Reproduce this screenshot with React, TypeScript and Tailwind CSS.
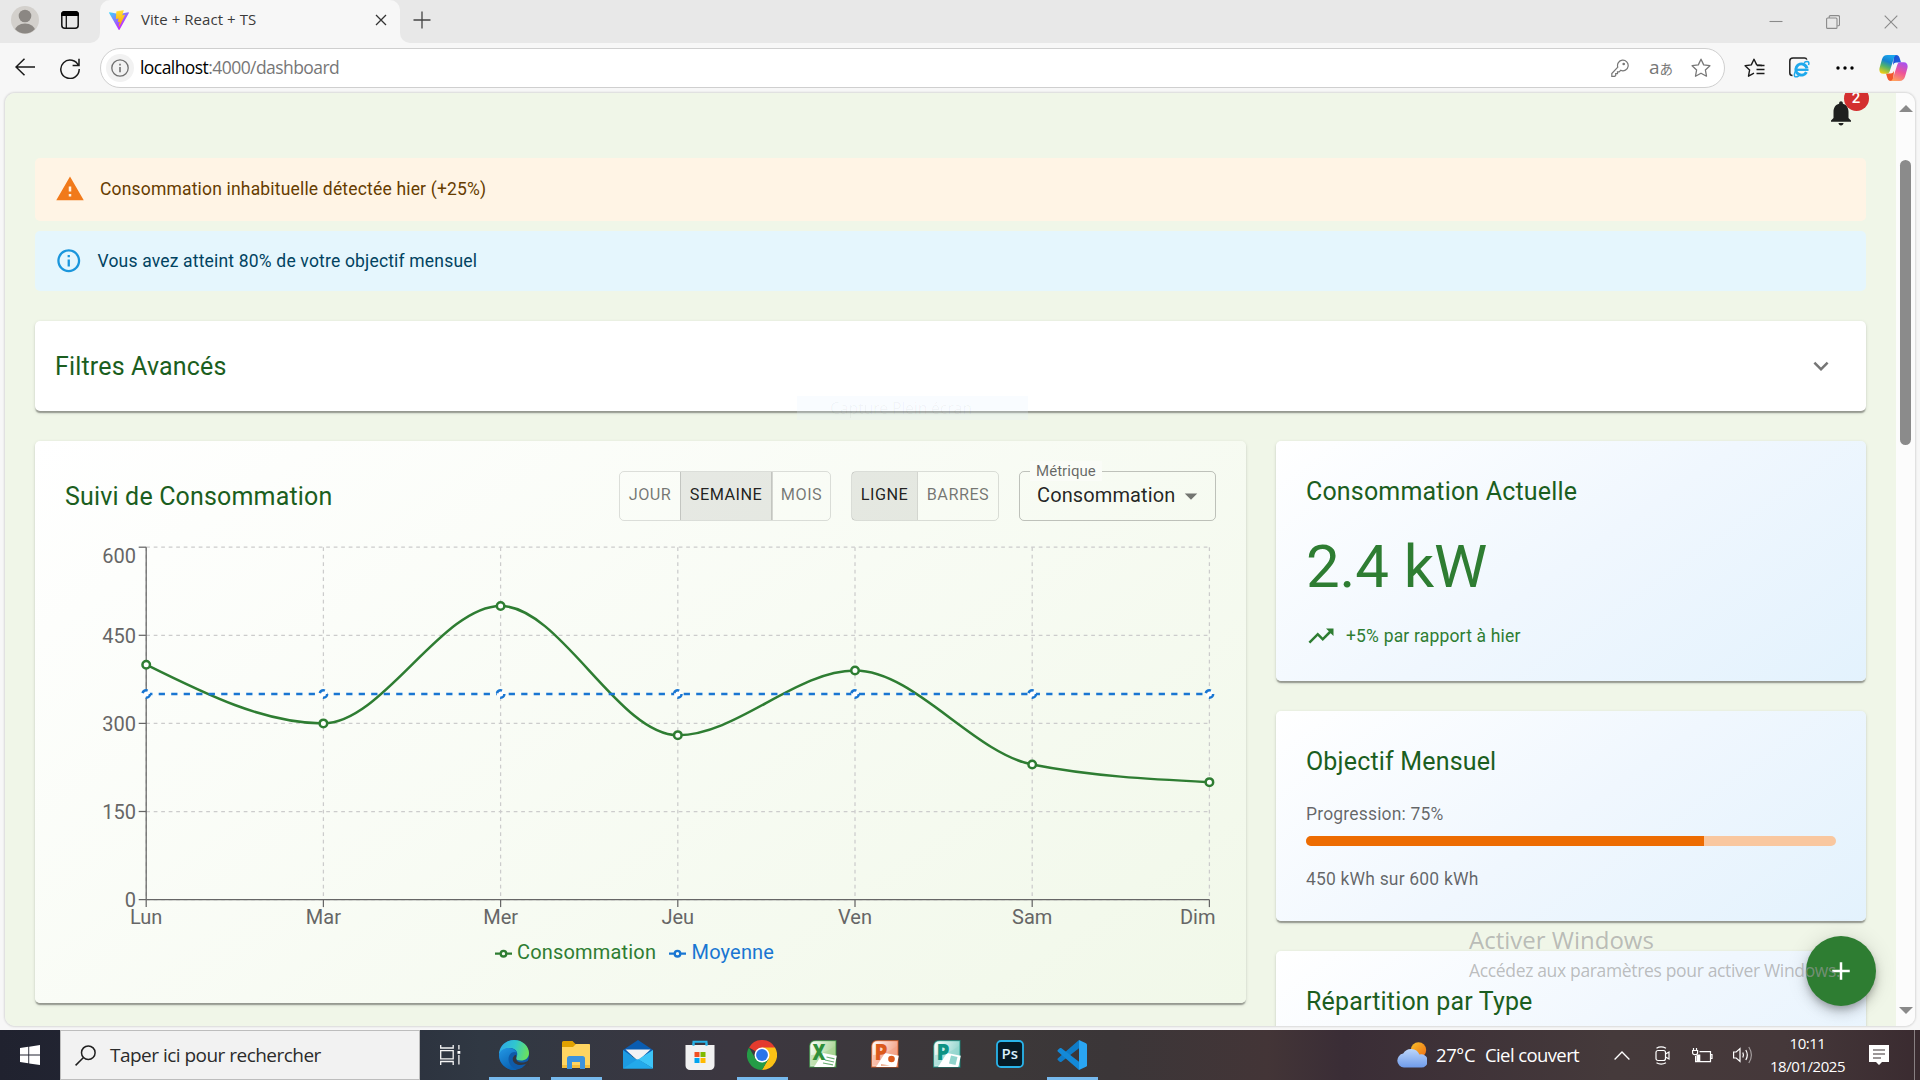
import React from "react";

const CARD_SHADOW =
  "shadow-[0_2.5px_1.25px_-1.25px_rgba(0,0,0,0.2),0_1.25px_1.25px_0_rgba(0,0,0,0.14),0_1.25px_3.75px_0_rgba(0,0,0,0.12)]";

/* ---------- Browser chrome ---------- */

function ViteLogo() {
  return (
    <svg width="20" height="20" viewBox="0 0 256 257">
      <defs>
        <linearGradient id="va" x1="-0.8%" x2="57.6%" y1="7.7%" y2="78.4%">
          <stop offset="0%" stopColor="#41D1FF" />
          <stop offset="100%" stopColor="#BD34FE" />
        </linearGradient>
        <linearGradient id="vb" x1="43.4%" x2="50.3%" y1="2.2%" y2="89%">
          <stop offset="0%" stopColor="#FFEA83" />
          <stop offset="8.3%" stopColor="#FFDD35" />
          <stop offset="100%" stopColor="#FFA800" />
        </linearGradient>
      </defs>
      <path fill="url(#va)" d="M255.153 37.938L134.897 252.976c-2.483 4.44-8.862 4.466-11.382.048L.875 37.958c-2.746-4.814 1.371-10.646 6.827-9.67l120.385 21.517a6.537 6.537 0 0 0 2.322-.004l117.867-21.483c5.438-.991 9.574 4.796 6.877 9.62Z" />
      <path fill="url(#vb)" d="M185.432.063L96.44 17.501a3.268 3.268 0 0 0-2.634 3.014l-5.474 92.456a3.268 3.268 0 0 0 3.997 3.378l24.777-5.718c2.318-.535 4.413 1.507 3.936 3.838l-7.361 36.047c-.495 2.426 1.782 4.5 4.151 3.78l15.304-4.649c2.372-.72 4.652 1.36 4.15 3.788l-11.698 56.621c-.732 3.542 3.979 5.473 5.943 2.437l1.313-2.028l72.516-144.72c1.215-2.423-.88-5.186-3.54-4.672l-25.505 4.922c-2.396.462-4.435-1.77-3.759-4.114l16.646-57.705c.677-2.35-1.37-4.583-3.769-4.113Z" />
    </svg>
  );
}

function TabStrip() {
  return (
    <div className="flex h-[43px] shrink-0 bg-[#e8e8e8]">
      <div className="flex w-[100px] items-center bg-[#f7f7f7]">
        <div className="flex h-full w-full items-center rounded-br-[10px] bg-[#e8e8e8] pb-[3px]">
          <svg className="ml-[11px]" width="28" height="28" viewBox="0 0 28 28">
            <defs>
              <clipPath id="av"><circle cx="14" cy="14" r="13.5" /></clipPath>
            </defs>
            <circle cx="14" cy="14" r="14" fill="#d3d0cc" />
            <g clipPath="url(#av)" fill="#8b8783">
              <circle cx="14" cy="10" r="6.3" />
              <ellipse cx="14" cy="25" rx="10.3" ry="7.6" />
            </g>
          </svg>
          <svg className="ml-[22px]" width="18" height="18" viewBox="0 0 18 18">
            <rect x="0.8" y="0.8" width="16.4" height="16.4" rx="3" fill="none" stroke="#111" strokeWidth="1.5" />
            <path d="M0 5V3.500a3.500 3.500 0 0 1 3.500-3.500h11a3.500 3.500 0 0 1 3.500 3.500V5z" fill="#000" />
            <path d="M5.300 5v12" stroke="#111" strokeWidth="1.3" />
          </svg>
        </div>
      </div>
      <div className="flex w-[300px] items-center rounded-t-[10px] bg-[#f7f7f7] pb-[3px] pl-[9px]">
        <ViteLogo />
        <span className="mb-[2px] ml-3 text-[15px] tracking-[0.06px] text-[#3b3b3b]">Vite + React + TS</span>
        <svg className="ml-auto mr-[13px]" width="12" height="12" viewBox="0 0 12 12">
          <path d="M1 1l10 10M11 1L1 11" stroke="#333" strokeWidth="1.3" />
        </svg>
      </div>
      <div className="grow bg-[#f7f7f7]">
        <div className="flex h-full items-center rounded-bl-[10px] bg-[#e8e8e8]">
          <svg className="mb-1 ml-[13px]" width="18" height="18" viewBox="0 0 18 18">
            <path d="M9 .5v17M.5 9h17" stroke="#444" strokeWidth="1.3" />
          </svg>
          <svg className="ml-auto" width="14" height="14" viewBox="0 0 14 14">
            <path d="M.5 6.500h13" stroke="#8a8a8a" strokeWidth="1.1" />
          </svg>
          <svg className="ml-[43px]" width="14" height="14" viewBox="0 0 14 14">
            <rect x=".6" y="3" width="10.400" height="10.400" rx="1" fill="none" stroke="#8a8a8a" strokeWidth="1.1" />
            <path d="M3.200 3V1.800a1.200 1.200 0 0 1 1.200-1.200h7.800a1.300 1.300 0 0 1 1.300 1.300v7.700a1.200 1.200 0 0 1-1.200 1.200h-1" fill="none" stroke="#8a8a8a" strokeWidth="1.1" />
          </svg>
          <svg className="ml-[44px] mr-[22px]" width="14" height="14" viewBox="0 0 14 14">
            <path d="M.7.7l12.600 12.600M13.300.7L.7 13.300" stroke="#8a8a8a" strokeWidth="1.1" />
          </svg>
        </div>
      </div>
    </div>
  );
}

const STAR = "M10 1.200l2.700 5.700 6.200.8-4.500 4.300 1.100 6.200L10 15.200l-5.500 3 1.100-6.200L1.100 7.700l6.200-.8z";

function CopilotIcon() {
  return (
    <svg width="29" height="28" viewBox="0 0 29 28">
      <defs>
        <linearGradient id="c1" x1="0.6" y1="0" x2="0.2" y2="1">
          <stop offset="0" stopColor="#1aa7ee" />
          <stop offset="0.35" stopColor="#1683cf" />
          <stop offset="0.62" stopColor="#52b36a" />
          <stop offset="1" stopColor="#f5cf12" />
        </linearGradient>
        <linearGradient id="c2" x1="0.7" y1="0" x2="0.3" y2="1">
          <stop offset="0" stopColor="#a951ee" />
          <stop offset="0.5" stopColor="#ee5597" />
          <stop offset="1" stopColor="#ffa25e" />
        </linearGradient>
        <linearGradient id="c3" x1="0" y1="0" x2="1" y2="1">
          <stop offset="0" stopColor="#1a4fd0" />
          <stop offset="1" stopColor="#2363e6" />
        </linearGradient>
      </defs>
      <path d="M15 1h2c2.400 0 3.200 1.400 3.900 3.800L22 8.500h-4.500c-2 0-3 1-3.600 3z" fill="url(#c3)" />
      <path d="M14 27h-2c-2.400 0-3.200-1.400-3.900-3.800L7 19.500h4.500c2 0 3-1 3.600-3z" fill="#f2572d" />
      <path d="M8.500 1H18c-1.700 0-2.500 1.200-3.200 3.500l-4 12.500c-.6 2-1.600 2.700-3.300 2.700H4.200C1 19.700-.2 17 .6 13.800L3 5.200C3.800 2.500 5.500 1 8.500 1z" fill="url(#c1)" />
      <path d="M20.500 27H11c1.700 0 2.500-1.200 3.200-3.500l4-12.500c.6-2 1.600-2.700 3.300-2.700h3.300c3.200 0 4.400 2.700 3.600 5.900L26 22.800c-.8 2.700-2.500 4.200-5.500 4.200z" fill="url(#c2)" />
    </svg>
  );
}

function Toolbar() {
  return (
    <div className="flex h-[50px] shrink-0 items-center bg-[#f7f7f7]">
      <svg className="mb-[2px] ml-[15px]" width="20" height="18" viewBox="0 0 20 18">
        <path d="M9.500.7L1 9l8.500 8.300M1 9h19" fill="none" stroke="#1a1a1a" strokeWidth="1.500" />
      </svg>
      <svg className="ml-[25px]" width="20" height="21" viewBox="0 0 20 21">
        <path d="M18.600 8A9.200 9.200 0 1 0 19.200 11M19 .8v6.700h-6.400" fill="none" stroke="#1a1a1a" strokeWidth="1.500" />
      </svg>
      <div className="ml-5 flex h-10 w-[1625px] items-center rounded-full border border-[#cfcfcf] bg-white pl-[5px]">
        <span className="flex size-7 items-center justify-center rounded-full bg-[#f2f2f2]">
          <svg width="18" height="18" viewBox="0 0 18 18">
            <circle cx="9" cy="9" r="8.200" fill="none" stroke="#707070" strokeWidth="1.300" />
            <path d="M9 8v5.300M9 4.700v1.700" stroke="#707070" strokeWidth="1.600" />
          </svg>
        </span>
        <span className="mb-[2px] ml-[6px] text-[17.5px] tracking-[-0.56px] text-[#777]">
          <span className="text-black">localhost</span>:4000/dashboard
        </span>
        <svg className="ml-auto" width="18" height="18" viewBox="0 0 18 18" fill="none" stroke="#777" strokeWidth="1.200">
          <path d="M11.300 1.200a5.300 5.300 0 1 1-1.600 10.100L8.200 12.800H6.500v1.800H4.700v1.900L3.800 17.300H.8v-2.800l6-6.300A5.300 5.300 0 0 1 11.300 1.200z" />
          <circle cx="12.700" cy="5" r="0.700" fill="#777" />
        </svg>
        <span className="mb-[2px] ml-[20px] flex w-[25px] items-baseline text-[#777]">
          <span className="text-[19px] leading-none">a</span>
          <span className="font-['Noto_Sans_CJK_JP',sans-serif] text-[13.5px] leading-none">あ</span>
        </span>
        <svg className="ml-[17px] mr-[13px]" width="20" height="20" viewBox="0 0 20 20">
          <path d={STAR} fill="none" stroke="#777" strokeWidth="1.300" strokeLinejoin="round" />
        </svg>
      </div>
      <svg className="ml-[19px]" width="21" height="20" viewBox="0 0 21 20" fill="none" stroke="#1a1a1a" strokeWidth="1.400">
        <path d="M18 7.500l-5.300-.6L10 1.200 7.300 6.900l-6.200.8L5.600 12l-1.100 6.200L10 15.200" strokeLinejoin="round" />
        <path d="M13 7.500h7.500M12.500 11.500h8M12.500 15.500h8" />
      </svg>
      <svg className="mb-[2px] ml-6" width="21" height="21" viewBox="0 0 21 21">
        <path d="M3.500 18.500C1.800 18.500.8 17.500.8 16V4C.8 2 2 1 4 1h11.500c1.300 0 2 .6 2.300 1.600" fill="none" stroke="#222" strokeWidth="1.500" />
        <circle cx="12.500" cy="12.500" r="5.600" fill="none" stroke="#1fa9ec" strokeWidth="3" strokeDasharray="30.500 6" transform="rotate(28 12.500 12.500)" />
        <path d="M8 12.800h11.500" stroke="#1fa9ec" strokeWidth="2.300" />
        <path d="M6.500 14c-2.500 5.500-.8 7 3.200 5M15 5.600c3.500-2 5.800-1 4.500 2.500" fill="none" stroke="#1fa9ec" strokeWidth="1.500" />
      </svg>
      <svg className="ml-[26px]" width="18" height="4" viewBox="0 0 18 4">
        <circle cx="2" cy="2" r="1.700" /><circle cx="9" cy="2" r="1.700" /><circle cx="16" cy="2" r="1.700" />
      </svg>
      <div className="ml-[25px]"><CopilotIcon /></div>
    </div>
  );
}

/* ---------- Chart ---------- */

const DAYS = ["Lun", "Mar", "Mer", "Jeu", "Ven", "Sam", "Dim"];
const VALUES = [400, 300, 500, 280, 390, 230, 200];
const X0 = 146.2;
const STEP = 177.2;
const Y0 = 899.600;
const TOP = 547.200;
const px = (i: number) => X0 + i * STEP;
const py = (v: number) => Y0 - (v / 600) * (Y0 - TOP);

/* Monotone cubic interpolation through equally spaced samples */
function monotonePath(values: number[]): string {
  const pts = values.map((v, i) => [px(i), py(v)]);
  const n = pts.length;
  const slopes = pts.slice(1).map((p, i) => (p[1] - pts[i][1]) / STEP);
  const t: number[] = [];
  for (let i = 1; i < n - 1; i++) {
    const a = slopes[i - 1];
    const b = slopes[i];
    t[i] = (Math.sign(a) + Math.sign(b)) * Math.min(Math.abs(a), Math.abs(b), 0.5 * Math.abs((a + b) / 2)) || 0;
  }
  t[0] = (3 * slopes[0] - t[1]) / 2;
  t[n - 1] = (3 * slopes[n - 2] - t[n - 2]) / 2;
  let d = `M${pts[0][0]},${pts[0][1]}`;
  const h = STEP / 3;
  for (let i = 1; i < n; i++) {
    const [xa, ya] = pts[i - 1];
    const [xb, yb] = pts[i];
    d += `C${xa + h},${ya + h * t[i - 1]},${xb - h},${yb - h * t[i]},${xb},${yb}`;
  }
  return d;
}

function Chart() {
  const levels = [0, 150, 300, 450, 600];
  return (
    <svg className="block" width="1211" height="482" viewBox="35 521 1211 482" fontSize="20" fontFamily="Roboto, sans-serif">
      <g stroke="#ccc" strokeWidth="1.25" strokeDasharray="3.75 3.75">
        {levels.map((v) => <line key={v} x1={X0} x2={px(6)} y1={py(v)} y2={py(v)} />)}
        {DAYS.map((d, i) => <line key={d} x1={px(i)} x2={px(i)} y1={TOP} y2={Y0} />)}
      </g>
      <g stroke="#666" strokeWidth="1.25">
        <line x1={X0} x2={px(6)} y1={Y0} y2={Y0} />
        <line x1={X0} x2={X0} y1={TOP} y2={Y0} />
        {levels.map((v) => <line key={v} x1={X0 - 7.5} x2={X0} y1={py(v)} y2={py(v)} />)}
        {DAYS.map((d, i) => <line key={d} x1={px(i)} x2={px(i)} y1={Y0} y2={Y0 + 7.5} />)}
      </g>
      <g fill="#666">
        {levels.map((v) => (
          <text key={v} x="136" y={v === 600 ? 563 : py(v) + 7.300} textAnchor="end">{v}</text>
        ))}
        {DAYS.map((d, i) => (
          <text key={d} x={i === 6 ? 1215.500 : px(i)} y="923.700" textAnchor={i === 6 ? "end" : "middle"}>{d}</text>
        ))}
      </g>
      <path d={monotonePath(VALUES)} fill="none" stroke="#2e7d32" strokeWidth="2.5" />
      {VALUES.map((v, i) => (
        <circle key={i} cx={px(i)} cy={py(v)} r="3.75" fill="#fff" stroke="#2e7d32" strokeWidth="2.5" />
      ))}
      <line x1={X0} x2={px(6)} y1={py(350)} y2={py(350)} stroke="#1976d2" strokeWidth="2.5" strokeDasharray="6.25 6.25" />
      {DAYS.map((d, i) => (
        <circle key={d} cx={px(i)} cy={py(350)} r="3.75" fill="#fff" stroke="#1976d2" strokeWidth="2.5" strokeDasharray="6.25 6.25" />
      ))}
      <g fill="none" strokeWidth="2.300">
        <path stroke="#2e7d32" d="M495 953.700h5.700M506.300 953.700h5.700M500.700 953.700a2.800 2.800 0 1 0 5.600 0a2.800 2.800 0 1 0-5.600 0" />
        <path stroke="#1976d2" d="M669 953.700h5.700M680.300 953.700h5.700M674.700 953.700a2.800 2.800 0 1 0 5.600 0a2.800 2.800 0 1 0-5.600 0" />
      </g>
      <g letterSpacing="0.18">
        <text x="517" y="959" fill="#2e7d32">Consommation</text>
        <text x="691.500" y="959" fill="#1976d2">Moyenne</text>
      </g>
    </svg>
  );
}

/* ---------- Dashboard ---------- */

const TITLE = "translate-y-px text-[25px] leading-10 tracking-[0.17px] text-[#1b5e20]";
const BODY = "text-[17.5px] leading-[25px] tracking-[0.18px]";
const SIDE_CARD = `rounded-[5px] bg-[linear-gradient(145deg,#ffffff_0%,#f0f7fe_50%,#e3f2fd_100%)] p-[30px] ${CARD_SHADOW}`;

function Toggle({ items, active, widths }: { items: string[]; active: number; widths: string[] }) {
  return (
    <div className="flex h-[50px] rounded-[5px] border border-black/12 text-[16.25px] tracking-[0.464px]">
      {items.map((t, i) => (
        <div
          key={t}
          className={`flex items-center justify-center pb-[1px] ${widths[i]} ${i > 0 ? "border-l border-black/15" : ""} ${
            i === active ? "bg-black/8 text-black/87" : "text-black/54"
          } ${i === active && i > 0 ? "border-r" : ""}`}
        >
          {t}
        </div>
      ))}
    </div>
  );
}

function MainCard() {
  return (
    <section className={`h-[562px] w-[1211px] rounded-[5px] bg-[linear-gradient(145deg,#ffffff_0%,#f1f8e9_100%)] pt-[30px] ${CARD_SHADOW}`}>
      <div className="flex h-[50px] items-center px-[30px]">
        <h2 className={`${TITLE} mr-auto`}>Suivi de Consommation</h2>
        <Toggle items={["JOUR", "SEMAINE", "MOIS"]} active={1} widths={["w-[60px]", "w-[92px]", "w-[58px]"]} />
        <div className="w-5" />
        <Toggle items={["LIGNE", "BARRES"]} active={0} widths={["w-[65px]", "w-[81px]"]} />
        <div className="relative ml-5 flex h-[50px] w-[197px] items-center rounded-[5px] border border-black/23 px-[17px] pb-[3px]">
          <span className="absolute -top-[11px] left-[10px] bg-[#fafcf7] px-[6px] text-[15px] leading-5 tracking-[0.05px] text-black/60">Métrique</span>
          <span className="text-[20px] tracking-[0.12px] text-black/87">Consommation</span>
          <svg className="ml-[1px] mt-[3px] shrink-0" width="30" height="30" viewBox="0 0 24 24"><path fill="#737571" d="M7 10l5 5 5-5z" /></svg>
        </div>
      </div>
      <Chart />
    </section>
  );
}

function Dashboard() {
  return (
    <main className="w-[1891px] shrink-0 bg-[#f0f6e8] px-[30px] font-['Roboto',sans-serif]">
      <div className="flex h-[65px] justify-end">
        <div className="relative mr-[10px] mt-[5px] size-[30px]">
          <svg width="30" height="30" viewBox="0 0 24 24" fill="#1f211f">
            <path d="M12 22c1.100 0 2-.9 2-2h-4c0 1.100.89 2 2 2m6-6v-5c0-3.070-1.640-5.640-4.500-6.320V4c0-.83-.67-1.500-1.500-1.500s-1.500.67-1.500 1.500v.68C7.630 5.360 6 7.920 6 11v5l-2 2v1h16v-1z" />
          </svg>
          <span className="absolute -top-[12px] left-[17.500px] flex size-[25px] items-center justify-center rounded-full bg-[#d32f2f] text-[15px] font-medium text-white">2</span>
        </div>
      </div>
      <div className="flex h-[63px] w-[1831px] items-center rounded-[5px] bg-[#fff4e5] pl-5">
        <svg className="mb-[2px]" width="30" height="30" viewBox="0 0 24 24" fill="#f17a1b"><path d="M1 21h22L12 2zm12-3h-2v-2h2zm0-4h-2v-4h2z" /></svg>
        <span className="ml-[15px] text-[17.5px] tracking-[0.18px] text-[#663c00]">Consommation inhabituelle détectée hier (+25%)</span>
      </div>
      <div className="mt-[10px] flex h-[60px] w-[1831px] items-center rounded-[5px] bg-[#e5f6fd] pl-5">
        <svg width="27.500" height="27.500" viewBox="0 0 24 24" fill="#1b96dc"><path d="M11 7h2v2h-2zm0 4h2v6h-2zm1-9C6.480 2 2 6.480 2 12s4.480 10 10 10 10-4.480 10-10S17.520 2 12 2m0 18c-4.410 0-8-3.590-8-8s3.590-8 8-8 8 3.590 8 8-3.590 8-8 8" /></svg>
        <span className="ml-[15px] text-[17.5px] tracking-[0.18px] text-[#014361]">Vous avez atteint 80% de votre objectif mensuel</span>
      </div>
      <div className={`mt-[30px] flex h-[90px] w-[1831px] items-center rounded-[5px] bg-white px-5 ${CARD_SHADOW}`}>
        <h2 className={TITLE}>Filtres Avancés</h2>
        <svg className="ml-auto mr-[10px]" width="30" height="30" viewBox="0 0 24 24" fill="#757575"><path d="M16.590 8.590 12 13.170 7.410 8.590 6 10l6 6 6-6z" /></svg>
      </div>
      <div className="mt-[30px] flex gap-[30px]">
        <MainCard />
        <div className="flex w-[590px] flex-col gap-[30px]">
          <section className={`h-[240px] ${SIDE_CARD}`}>
            <h2 className={TITLE}>Consommation Actuelle</h2>
            <p className="mt-[21px] text-[60px] leading-[70px] tracking-[-0.1px] text-[#2e7d32]">2.4 kW</p>
            <div className="mt-[19px] flex h-[30px] items-center text-[17.5px] tracking-[0.18px] text-[#2e7d32]">
              <svg width="30" height="30" viewBox="0 0 24 24" fill="currentColor"><path d="m16 6 2.290 2.290-4.880 4.880-4-4L2 16.590 3.410 18l6-6 4 4 6.300-6.290L22 12V6z" /></svg>
              <span className="ml-[10px]">+5% par rapport à hier</span>
            </div>
          </section>
          <section className={`h-[210px] ${SIDE_CARD}`}>
            <h2 className={TITLE}>Objectif Mensuel</h2>
            <p className={`mt-[21px] text-black/60 ${BODY}`}>Progression: 75%</p>
            <div className="mt-[9px] h-[10px] overflow-hidden rounded-[5px] bg-[#f9c79f]">
              <div className="h-full w-3/4 bg-[#ed6c02]" />
            </div>
            <p className={`mt-[21px] text-black/60 ${BODY}`}>450 kWh sur 600 kWh</p>
          </section>
          <section className={`h-[240px] ${SIDE_CARD}`}>
            <h2 className={TITLE}>Répartition par Type</h2>
          </section>
        </div>
      </div>
    </main>
  );
}

function Scrollbar() {
  return (
    <div className="flex w-[19px] flex-col items-center bg-[#fcfcfc] pt-3">
      <svg width="14" height="7" viewBox="0 0 14 7"><path d="M7 0l7 7H0z" fill="#8a8a8a" /></svg>
      <div className="mt-12 h-[285px] w-[11px] rounded-full bg-[#8b8b8b]" />
      <svg className="mb-3 mt-auto" width="14" height="7" viewBox="0 0 14 7"><path d="M7 7l7-7H0z" fill="#8a8a8a" /></svg>
    </div>
  );
}

/* ---------- Taskbar ---------- */

function EdgeIcon() {
  return (
    <svg width="30" height="30" viewBox="0 0 30 30">
      <defs>
        <linearGradient id="e1" x1="0" y1="0.3" x2="1" y2="0.5">
          <stop offset="0" stopColor="#2fa8e8" /><stop offset="0.5" stopColor="#30c6cf" /><stop offset="1" stopColor="#6be25c" />
        </linearGradient>
        <linearGradient id="e2" x1="0" y1="0" x2="0.5" y2="1">
          <stop offset="0" stopColor="#2398e5" /><stop offset="1" stopColor="#0a64b5" />
        </linearGradient>
      </defs>
      <circle cx="15" cy="15" r="15" fill="#0f5ba9" />
      <path d="M0 15C0 6 7 0 15 0c9 0 15 6.500 15 13 0 5-3.800 7.500-8 7.500-4.500 0-5.500-1.700-4.500-3.500C20 12 16 8 11 8 5 8 1 12 0 15z" fill="url(#e1)" />
      <path d="M0 15c1-5 5.500-7 9.500-7 4 0 7 2 8.200 4.500C14 10.500 9.500 13.500 9.500 19c0 5 3.500 9.500 8.500 10.700C8.500 31.500 0 24 0 15z" fill="url(#e2)" />
      <path d="M17.300 17.500c-.7 3 2 5 5.700 5 2.600 0 4.600-.8 5.800-1.600l1.700.3-1 4.300-4 1c1.500-1.300 2.200-2.400 2.700-3.400-6 4-14.500 1.500-14.500-4.100 0-1.500 1.300-3.200 2.800-4.200.8.7 1 1.700.8 2.700z" fill="#33363f" />
    </svg>
  );
}

function ExplorerIcon() {
  return (
    <svg width="28" height="28" viewBox="0 0 28 28">
      <path d="M0 1.500A1.500 1.500 0 0 1 1.500 0h9l3 3H28v8H0z" fill="#e0a100" />
      <path d="M0 6h11l3-3h12.500A1.500 1.500 0 0 1 28 4.500V27H0z" fill="#ffd561" />
      <path d="M0 24h28v3H0z" fill="#f4bd3a" />
      <path d="M5 28V17.500A2.500 2.500 0 0 1 7.500 15h13a2.500 2.500 0 0 1 2.500 2.500V28h-5v-7h-8v7z" fill="#3d93dc" />
    </svg>
  );
}

function MailIcon() {
  return (
    <svg width="30" height="29" viewBox="0 0 30 29">
      <path d="M0 10L15 0l15 10v6H0z" fill="#0a5cb0" />
      <path d="M2.500 9.500h25L15 21z" fill="#f2f2f4" />
      <path d="M0 10l15 10.500L30 28.500H0z" fill="#1d9be2" />
      <path d="M30 10L15 19.500 30 28.500z" fill="#3dc4f7" />
      <path d="M0 28.500L15 19l15 9.500z" fill="#23a9ea" />
    </svg>
  );
}

function StoreIcon() {
  return (
    <svg width="30" height="30" viewBox="0 0 30 30">
      <path d="M8.500 8V1.800h13V8" fill="none" stroke="#27b3e8" strokeWidth="2" />
      <path d="M.5 5h29v20.500a4.500 4.500 0 0 1-4.500 4.500H5a4.500 4.500 0 0 1-4.500-4.500z" fill="#f1f1f1" />
      <path d="M8.500 2.800v3M21.500 2.800v3" stroke="#27b3e8" strokeWidth="2" />
      <path d="M9.500 12h5v5h-5z" fill="#f25022" /><path d="M15.500 12h5v5h-5z" fill="#7fba00" />
      <path d="M9.500 18h5v5h-5z" fill="#00a4ef" /><path d="M15.500 18h5v5h-5z" fill="#ffb900" />
    </svg>
  );
}

function ChromeIcon() {
  return (
    <svg width="30" height="30" viewBox="0 0 48 48">
      <path d="M24 24L3.200 12A24 24 0 0 1 44.800 12z" fill="#e33b2e" />
      <path d="M24 12h20.800A24 24 0 0 1 24 48l10.400-18z" fill="#fbc116" />
      <path d="M13.600 30L3.200 12A24 24 0 0 0 24 48l10.400-18z" fill="#249c46" />
      <circle cx="24" cy="24" r="12" fill="#fff" />
      <circle cx="24" cy="24" r="9.500" fill="#2a75ea" />
    </svg>
  );
}

function OfficeIcon({ letter, dark, light, id }: { letter: string; dark: string; light: string; id: string }) {
  return (
    <svg className="mb-[2px] mr-[2px]" width="28" height="28" viewBox="0 0 28 28">
      <defs>
        <linearGradient id={id} x1="0" y1="0" x2="1" y2="0.4">
          <stop offset="0" stopColor="#fff" /><stop offset="1" stopColor={light} />
        </linearGradient>
      </defs>
      <path d="M.7 27V6Q1 .7 7 .7h20V27z" fill={`url(#${id})`} stroke={dark} strokeOpacity="0.6" strokeWidth="1.300" />
      <path d="M2 25.500V15c8 0 16-3 24-9v19.500z" fill={light} opacity="0.5" />
      <path d="M14 13l13.800 2.800-2.500 11.200H5z" fill="#fff" />
      <text x="3.500" y="20" fontFamily="Open Sans, sans-serif" fontWeight="800" fontSize="22" fill={dark} textLength="13" lengthAdjust="spacingAndGlyphs">{letter}</text>
      {letter === "X" ? (
        <path d="M17.500 17l8 1.800M16 20l9 2M14 23l10 1.800" stroke={dark} strokeWidth="1.200" opacity="0.7" />
      ) : id === "of2" ? (
        <g fill={dark}><circle cx="20.500" cy="19" r="3.300" /><path d="M10 24l9 1.500-9 .5z" opacity=".5" /></g>
      ) : (
        <path d="M18 15.500l6.500 1.500-2 8-6.500-1.500z" fill={light} />
      )}
    </svg>
  );
}

function PhotoshopIcon() {
  return (
    <svg className="mb-[2px]" width="28" height="28" viewBox="0 0 28 28">
      <rect x="1" y="1" width="26" height="26" rx="4" fill="#051a26" stroke="#29b5ec" strokeWidth="1.800" />
      <text x="5.500" y="18.500" fontFamily="Open Sans, sans-serif" fontWeight="600" fontSize="14.500" fill="#d7effb" textLength="16.500" lengthAdjust="spacingAndGlyphs">Ps</text>
    </svg>
  );
}

function CodeIcon() {
  return (
    <svg width="30" height="30" viewBox="0 0 30 30">
      <path d="M22 0L1 18.300c-.7.6-.7 1.400 0 2l1.700 1.500c.6.400 1.200.4 1.800 0L22 8.300z" fill="#0f7cc8" />
      <path d="M22 30L1 11.700c-.7-.6-.7-1.400 0-2l1.700-1.500c.6-.4 1.200-.4 1.800 0L22 21.700z" fill="#1389d8" />
      <path d="M22 0l7 3.200c.6.3 1 .9 1 1.600v20.400c0 .7-.4 1.300-1 1.600L22 30z" fill="#2aa5f2" />
    </svg>
  );
}

function Taskbar() {
  const apps: [React.ReactNode, boolean][] = [
    [<EdgeIcon />, true],
    [<ExplorerIcon />, true],
    [<MailIcon />, false],
    [<StoreIcon />, false],
    [<ChromeIcon />, true],
    [<OfficeIcon letter="X" dark="#2f8f3a" light="#a5d38f" id="of1" />, false],
    [<OfficeIcon letter="P" dark="#dc5a1c" light="#f4a083" id="of2" />, false],
    [<OfficeIcon letter="P" dark="#0f9384" light="#8fd4cc" id="of3" />, false],
    [<PhotoshopIcon />, false],
    [<CodeIcon />, true],
  ];
  return (
    <footer className="flex h-[50px] shrink-0 bg-[linear-gradient(90deg,#20222f_0%,#262a38_15%,#303843_25%,#3c3740_38%,#3c3839_52%,#3b3638_58%,#433537_66%,#3a2d36_70%,#453a3b_84%,#45383a_93%,#3a2b30_100%)] text-white">
      <div className="flex w-[60px] items-center justify-center">
        <svg width="20" height="20" viewBox="0 0 20 20" fill="#fff"><path d="M0 3l8.300-1.200v7.800H0zM9.200 1.700L20 0v9.600H9.200zM0 10.500h8.300v7.800L0 17zM9.200 10.500H20V20L9.200 18.400z" /></svg>
      </div>
      <div className="flex w-[360px] items-center border border-[#bdbdbd] bg-[#f2f2f2] pl-[14px] text-[#2b2b2b]">
        <svg width="21" height="21" viewBox="0 0 21 21" fill="none" stroke="#1f1f1f" strokeWidth="1.500"><circle cx="13.300" cy="7.700" r="6.800" /><path d="M8.500 12.500L.6 20.400" /></svg>
        <span className="ml-[14px] text-[19px] tracking-[-0.52px]">Taper ici pour rechercher</span>
      </div>
      <div className="flex w-[63px] items-center justify-center">
        <svg className="mr-[2px]" width="21" height="20" viewBox="0 0 21 20" fill="none" stroke="#f5f5f5" strokeWidth="1.300"><path d="M.7 0v3h12.500V0M.7 20v-3.500h12.500V20M.7 5.700h12.500v8.200H.7zM18.900 0v4.500M18.900 10v9.500" /><path d="M17.500 6h2.800v2.800h-2.800z" fill="#fff" stroke="none" /></svg>
      </div>
      {apps.map(([icon, open], i) => (
        <div key={i} className="flex w-[62px] flex-col items-center">
          <div className="flex h-[47px] items-center pt-[2px]">{icon}</div>
          {open && <div className="h-[3px] w-[51px] bg-[#76b9ed]" />}
        </div>
      ))}
      <div className="ml-auto flex items-center">
        <svg width="30" height="26" viewBox="0 0 30 26">
          <defs>
            <linearGradient id="cl" x1="0" y1="0" x2="0" y2="1"><stop offset="0" stopColor="#bcd6fb" /><stop offset="1" stopColor="#6f9bea" /></linearGradient>
            <linearGradient id="su" x1="0" y1="0" x2="1" y2="1"><stop offset="0" stopColor="#f7c02b" /><stop offset="1" stopColor="#ef6c12" /></linearGradient>
          </defs>
          <circle cx="21.500" cy="8" r="7.700" fill="url(#su)" />
          <path d="M7 25.500a7 7 0 0 1-.8-13.900 9 9 0 0 1 16.200 1A6.600 6.600 0 1 1 23.500 25.500z" fill="url(#cl)" />
        </svg>
        <span className="ml-[9px] w-[38px] whitespace-nowrap text-[18.5px] tracking-[-0.4px]">27°C</span>
        <span className="ml-[11px] w-[94px] whitespace-nowrap text-[18.5px] tracking-[-0.6px]">Ciel couvert</span>
        <svg className="ml-[35px]" width="16" height="9" viewBox="0 0 16 9"><path d="M.6 8.500L8 1l7.400 7.500" fill="none" stroke="#fff" strokeWidth="1.300" /></svg>
        <svg className="ml-[25px]" width="16" height="19" viewBox="0 0 16 19" fill="none" stroke="#fff" strokeWidth="1.200"><rect x="1" y="4.500" width="9.500" height="10" rx="2" /><path d="M10.500 8l3.500-2v7l-3.500-2M1.500 2.200Q6 -.4 11 2.200M1.500 16.800Q6 19.400 11 16.800" /></svg>
        <svg className="ml-[21px]" width="21" height="15" viewBox="0 0 21 15" fill="none" stroke="#fff" strokeWidth="1.200"><path d="M7.500 3.600h11v10H3.600V8M18.500 6.500h1.500v4h-1.500M1.500 0v2.500M4.500 0v2.500M.6 2.500h5v2.200a2 2 0 0 1-2 2h-1a2 2 0 0 1-2-2z" /><path d="M4.500 6.500h3.800v6.500H4.500z" fill="#fff" stroke="none" /></svg>
        <svg className="ml-[20px]" width="20" height="18" viewBox="0 0 20 18" fill="none" stroke="#fff" strokeWidth="1.200"><path d="M.6 6v6h2.600L7 15.500v-13L3.200 6z" /><path d="M9.800 6.500q1.300 2.500 0 5M12.800 4q3 5 0 10" /><path d="M15.800 1q5.200 8 0 16" opacity=".5" /></svg>
        <div className="ml-[17px] flex w-[75px] flex-col items-center whitespace-nowrap pb-[1px] text-[15px] leading-[23px] tracking-[-0.45px]">
          <span>10:11</span>
          <span>18/01/2025</span>
        </div>
        <svg className="ml-[24px] mr-[25px]" width="20" height="20" viewBox="0 0 20 20"><path d="M0 0h20v17h-7l-3 3-3-3H0z" fill="#fff" /><path d="M4 5h12M4 9h12M4 13h8" stroke="#3a3033" strokeWidth="1.200" /></svg>
        <div className="mr-[5px] h-[50px] w-px bg-white/40" />
      </div>
    </footer>
  );
}

export default function App() {
  return (
    <div className="relative flex h-[1080px] w-[1920px] flex-col overflow-hidden bg-[#f7f7f7] font-['Open_Sans','Noto_Sans',sans-serif]">
      <TabStrip />
      <Toolbar />
      <div className="ml-[5px] flex h-[933px] w-[1910px] shrink-0 overflow-hidden rounded-[10px] shadow-[0_0_2px_1px_rgba(0,0,0,0.12)]">
        <Dashboard />
        <Scrollbar />
      </div>
      <div className="h-1 shrink-0" />
      <Taskbar />

      <div className="absolute left-[797px] top-[396px] flex h-6 w-[231px] items-center bg-[#dff0ff]/20 pl-[33px] text-[16px] tracking-[-0.25px] text-black/4">
        Capture Plein écran
      </div>
      <div className="absolute left-[1806px] top-[936px] flex size-[70px] items-center justify-center rounded-full bg-[#2e7d32] shadow-[0_4px_6px_-1px_rgba(0,0,0,0.2),0_7px_12px_rgba(0,0,0,0.14),0_1px_22px_rgba(0,0,0,0.12)]">
        <svg width="30" height="30" viewBox="0 0 24 24" fill="#fff"><path d="M19 13h-6v6h-2v-6H5v-2h6V5h2v6h6z" /></svg>
      </div>
      <div className="absolute left-[1469px] top-[922px] whitespace-nowrap text-[#9a9a9a]/65">
        <p className="text-[24px] leading-9">Activer Windows</p>
        <p className="text-[17.5px] leading-6 tracking-[-0.34px]">Accédez aux paramètres pour activer Windows.</p>
      </div>
    </div>
  );
}
